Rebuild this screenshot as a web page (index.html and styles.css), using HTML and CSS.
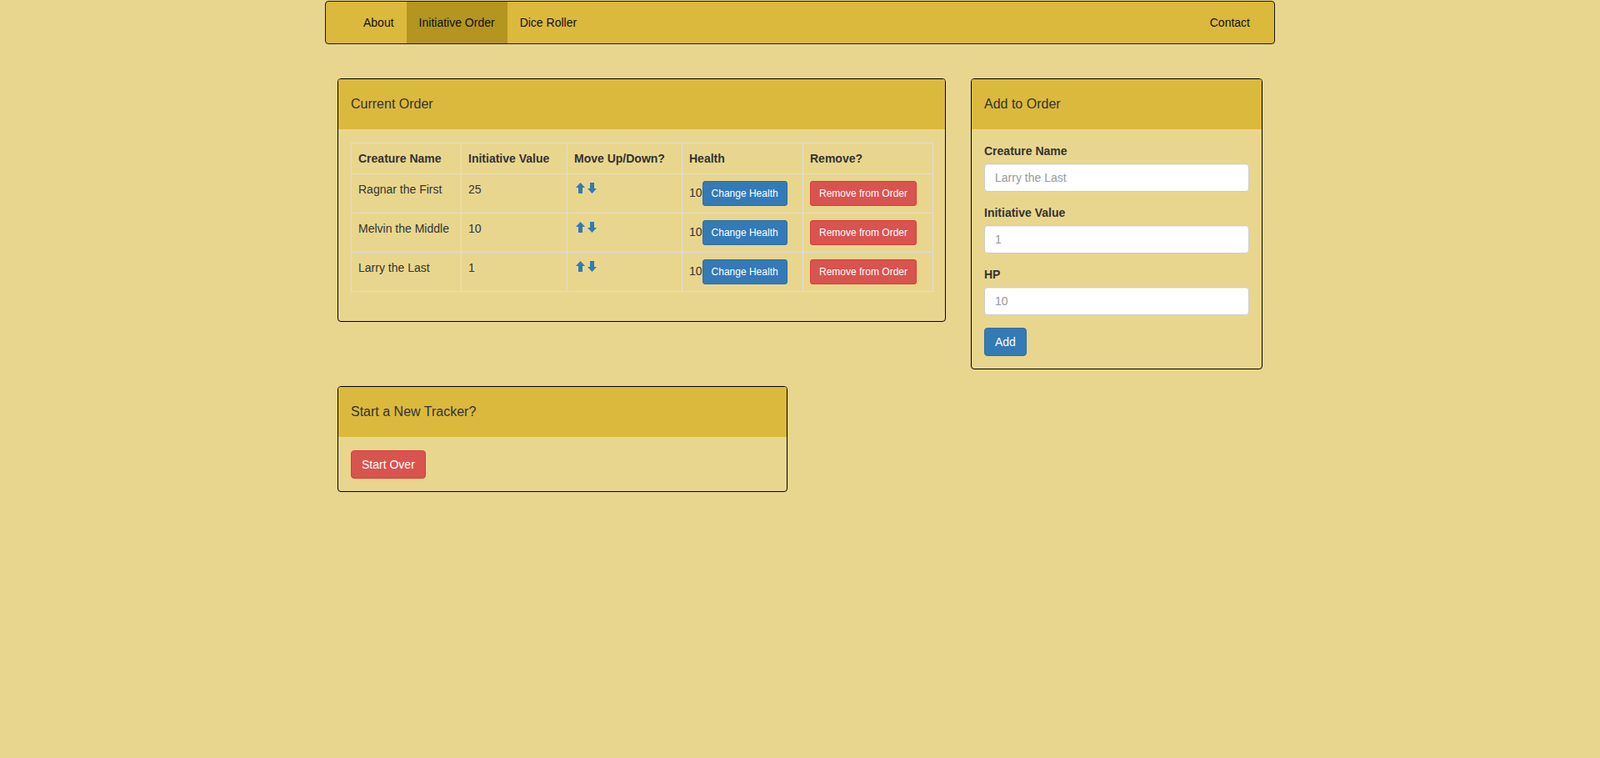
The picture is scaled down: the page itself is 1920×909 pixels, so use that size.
FILE: index.html
```html
<!DOCTYPE html>
<html lang="en">
<head>
<meta charset="utf-8">
<title>Initiative Order</title>
<link rel="stylesheet" href="styles.css">
</head>
<body>
<div class="container">
  <nav class="navbar">
    <div class="brand"></div>
    <ul class="nav">
      <li><a href="#">About</a></li>
      <li class="active"><a href="#">Initiative Order</a></li>
      <li><a href="#">Dice Roller</a></li>
    </ul>
    <ul class="nav nav-right">
      <li><a href="#">Contact</a></li>
    </ul>
  </nav>

  <main class="main">
    <div class="row">
      <section class="panel panel-order">
        <div class="panel-heading"><h3 class="panel-title">Current Order</h3></div>
        <div class="panel-body">
          <table class="table">
            <colgroup>
              <col class="c1"><col class="c2"><col class="c3"><col class="c4"><col class="c5">
            </colgroup>
            <thead>
              <tr><th>Creature Name</th><th>Initiative Value</th><th>Move Up/Down?</th><th>Health</th><th>Remove?</th></tr>
            </thead>
            <tbody>
              <tr>
                <td>Ragnar the First</td><td>25</td>
                <td><span class="arrows"><svg class="arr" viewBox="0 0 11 13" width="11" height="13"><path d="M5.5 0L11 6H8V13H3V6H0Z"/></svg><svg class="arr" viewBox="0 0 11 13" width="11" height="13"><path d="M3 0H8V7H11L5.5 13L0 7H3Z"/></svg></span></td>
                <td>10<button class="btn btn-sm btn-primary">Change Health</button></td>
                <td><button class="btn btn-sm btn-danger">Remove from Order</button></td>
              </tr>
              <tr>
                <td>Melvin the Middle</td><td>10</td>
                <td><span class="arrows"><svg class="arr" viewBox="0 0 11 13" width="11" height="13"><path d="M5.5 0L11 6H8V13H3V6H0Z"/></svg><svg class="arr" viewBox="0 0 11 13" width="11" height="13"><path d="M3 0H8V7H11L5.5 13L0 7H3Z"/></svg></span></td>
                <td>10<button class="btn btn-sm btn-primary">Change Health</button></td>
                <td><button class="btn btn-sm btn-danger">Remove from Order</button></td>
              </tr>
              <tr>
                <td>Larry the Last</td><td>1</td>
                <td><span class="arrows"><svg class="arr" viewBox="0 0 11 13" width="11" height="13"><path d="M5.5 0L11 6H8V13H3V6H0Z"/></svg><svg class="arr" viewBox="0 0 11 13" width="11" height="13"><path d="M3 0H8V7H11L5.5 13L0 7H3Z"/></svg></span></td>
                <td>10<button class="btn btn-sm btn-primary">Change Health</button></td>
                <td><button class="btn btn-sm btn-danger">Remove from Order</button></td>
              </tr>
            </tbody>
          </table>
        </div>
      </section>

      <section class="panel panel-add">
        <div class="panel-heading"><h3 class="panel-title">Add to Order</h3></div>
        <div class="panel-body">
          <div class="form-group">
            <label class="label">Creature Name</label>
            <input class="form-control" type="text" placeholder="Larry the Last">
          </div>
          <div class="form-group">
            <label class="label">Initiative Value</label>
            <input class="form-control" type="text" placeholder="1">
          </div>
          <div class="form-group">
            <label class="label">HP</label>
            <input class="form-control" type="text" placeholder="10">
          </div>
          <button class="btn btn-primary">Add</button>
        </div>
      </section>
    </div>

    <section class="panel panel-start">
      <div class="panel-heading"><h3 class="panel-title">Start a New Tracker?</h3></div>
      <div class="panel-body">
        <button class="btn btn-danger">Start Over</button>
      </div>
    </section>
  </main>
</div>
</body>
</html>
```

FILE: styles.css
```css
* { box-sizing: border-box; }

html, body {
  margin: 0;
  padding: 0;
}

body {
  background: #e9d68e;
  font-family: "Liberation Sans", Arial, Helvetica, sans-serif;
  font-size: 14px;
  line-height: 20px;
  color: #333;
}

.container {
  width: 1140px;
  margin: 0 auto;
  padding-top: 1px;
}

/* Navbar */
.navbar {
  height: 52px;
  display: flex;
  background: #dbb93d;
  border: 1px solid #1a1a1a;
  border-radius: 4px;
}

.brand {
  width: 30px;
  flex: none;
}

.nav {
  list-style: none;
  margin: 0;
  padding: 0;
  display: flex;
}

.nav-right {
  margin-left: auto;
  margin-right: 14px;
}

.nav li a {
  display: block;
  padding: 0 15px;
  line-height: 50px;
  color: #111;
  text-decoration: none;
}

.nav li.active a {
  background: #b3951f;
}

/* Main */
.main {
  padding: 0 15px;
  margin-top: 41px;
}

.row {
  display: flex;
  align-items: flex-start;
  gap: 30px;
}

.panel {
  border: 1px solid #000;
  border-radius: 4px;
  margin-bottom: 20px;
}

.panel-order { width: 730px; }
.panel-add { width: 350px; }
.panel-start { width: 540px; }

.panel-heading {
  height: 61px;
  padding: 0 15px;
  display: flex;
  align-items: center;
  background: #dbb93d;
  border-bottom: 1px solid #e4d8a4;
  border-radius: 3px 3px 0 0;
}

.panel-title {
  margin: 0;
  font-size: 16px;
  font-weight: normal;
  line-height: 18px;
  color: #333;
}

.panel-body {
  padding: 15px;
}

/* Table */
.table {
  width: 698px;
  table-layout: fixed;
  border-collapse: collapse;
  margin-bottom: 20px;
}

.c1 { width: 132px; }
.c2 { width: 127px; }
.c3 { width: 138px; }
.c4 { width: 145px; }
.c5 { width: 156px; }

.table th,
.table td {
  border: 1px solid #ddd;
  padding: 8px;
  text-align: left;
  vertical-align: top;
  line-height: 20px;
  white-space: nowrap;
}

.table th {
  font-weight: bold;
  vertical-align: bottom;
}

.arrows {
  display: inline-flex;
  gap: 3px;
  margin-left: 2px;
  padding-top: 2px;
  vertical-align: top;
}

.arr {
  display: block;
  fill: #337ab7;
}

/* Buttons */
.btn {
  display: inline-block;
  font-family: inherit;
  font-size: 14px;
  line-height: 20px;
  padding: 6px 12px;
  border: 1px solid transparent;
  border-radius: 4px;
  color: #fff;
  cursor: pointer;
  vertical-align: middle;
}

.btn-sm {
  font-size: 12px;
  line-height: 18px;
  padding: 5px 10px;
  border-radius: 3px;
  vertical-align: baseline;
}

.btn-primary {
  background: #337ab7;
  border-color: #2e6da4;
}

.btn-danger {
  background: #d9534f;
  border-color: #d43f3a;
}

/* Form */
.form-group {
  margin-bottom: 15px;
}

.label {
  display: block;
  font-weight: bold;
  margin-bottom: 5px;
  line-height: 20px;
}

.form-control {
  display: block;
  width: 100%;
  height: 34px;
  padding: 6px 12px;
  font-family: inherit;
  font-size: 14px;
  line-height: 20px;
  color: #555;
  background: #fff;
  border: 1px solid #ccc;
  border-radius: 4px;
  box-shadow: inset 0 1px 1px rgba(0, 0, 0, 0.075);
}

.form-control::placeholder {
  color: #999;
}
```
